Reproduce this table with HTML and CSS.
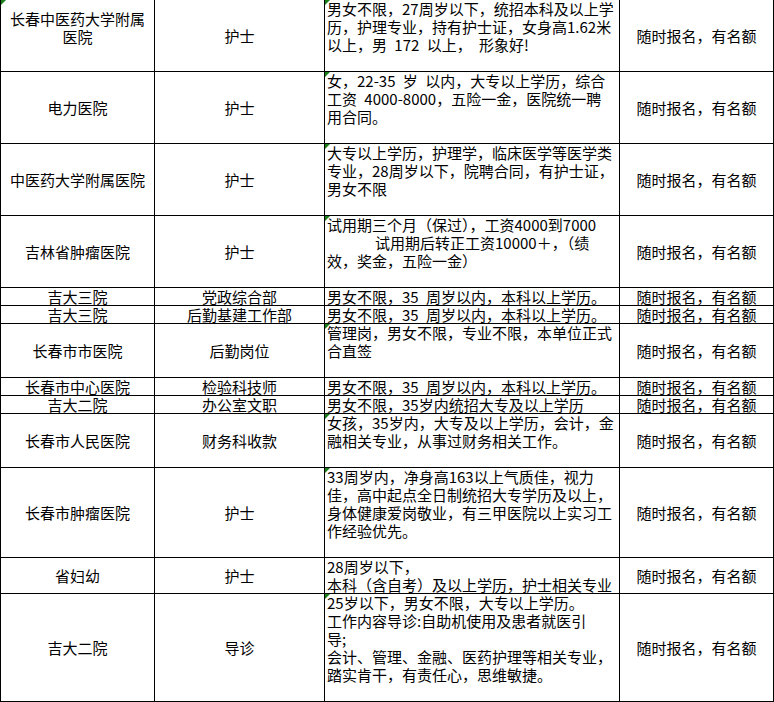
FILE: index.html
```html
<!DOCTYPE html>
<html lang="zh-CN">
<head>
<meta charset="utf-8">
<title>招聘信息</title>
<link rel="stylesheet" href="styles.css">
</head>
<body>
<div class="sheet">
  <div class="cell c mark first-name">长春中医药大学附属<br>医院</div>
  <div class="cell c">护士</div>
  <div class="cell t mark">男女不限，27周岁以下，统招本科及以上学<br>历，护理专业，持有护士证，女身高1.62米<br>以上，男 172 以上， 形象好!</div>
  <div class="cell c">随时报名，有名额</div>

  <div class="cell c">电力医院</div>
  <div class="cell c">护士</div>
  <div class="cell t mark">女，22-35 岁 以内，大专以上学历，综合<br>工资 4000-8000，五险一金，医院统一聘<br>用合同。</div>
  <div class="cell c">随时报名，有名额</div>

  <div class="cell c">中医药大学附属医院</div>
  <div class="cell c">护士</div>
  <div class="cell t mark">大专以上学历，护理学，临床医学等医学类<br>专业，28周岁以下，院聘合同，有护士证，<br>男女不限</div>
  <div class="cell c">随时报名，有名额</div>

  <div class="cell c">吉林省肿瘤医院</div>
  <div class="cell c">护士</div>
  <div class="cell t mark">试用期三个月（保过），工资4000到7000<br><span class="indent"></span>试用期后转正工资10000＋，（绩<br>效，奖金，五险一金）</div>
  <div class="cell c">随时报名，有名额</div>

  <div class="cell c">吉大三院</div>
  <div class="cell c">党政综合部</div>
  <div class="cell t">男女不限，35 周岁以内，本科以上学历。</div>
  <div class="cell c">随时报名，有名额</div>

  <div class="cell c">吉大三院</div>
  <div class="cell c">后勤基建工作部</div>
  <div class="cell t">男女不限，35 周岁以内，本科以上学历。</div>
  <div class="cell c">随时报名，有名额</div>

  <div class="cell c">长春市市医院</div>
  <div class="cell c">后勤岗位</div>
  <div class="cell t mark">管理岗，男女不限，专业不限，本单位正式<br>合直签</div>
  <div class="cell c">随时报名，有名额</div>

  <div class="cell c">长春市中心医院</div>
  <div class="cell c">检验科技师</div>
  <div class="cell t">男女不限，35 周岁以内，本科以上学历。</div>
  <div class="cell c">随时报名，有名额</div>

  <div class="cell c">吉大二院</div>
  <div class="cell c">办公室文职</div>
  <div class="cell t">男女不限，35岁内统招大专及以上学历</div>
  <div class="cell c">随时报名，有名额</div>

  <div class="cell c">长春市人民医院</div>
  <div class="cell c">财务科收款</div>
  <div class="cell t mark">女孩，35岁内，大专及以上学历，会计，金<br>融相关专业，从事过财务相关工作。</div>
  <div class="cell c">随时报名，有名额</div>

  <div class="cell c">长春市肿瘤医院</div>
  <div class="cell c">护士</div>
  <div class="cell t mark">33周岁内，净身高163以上气质佳，视力<br>佳，高中起点全日制统招大专学历及以上，<br>身体健康爱岗敬业，有三甲医院以上实习工<br>作经验优先。</div>
  <div class="cell c">随时报名，有名额</div>

  <div class="cell c">省妇幼</div>
  <div class="cell c">护士</div>
  <div class="cell t">28周岁以下，<br>本科（含自考）及以上学历，护士相关专业</div>
  <div class="cell c">随时报名，有名额</div>

  <div class="cell c">吉大二院</div>
  <div class="cell c">导诊</div>
  <div class="cell t mark">25岁以下，男女不限，大专以上学历。<br>工作内容导诊:自助机使用及患者就医引<br>导;<br>会计、管理、金融、医药护理等相关专业，<br>踏实肯干，有责任心，思维敏捷。</div>
  <div class="cell c">随时报名，有名额</div>
</div>
</body>
</html>
```
FILE: styles.css
```css
html, body {
  margin: 0;
  padding: 0;
  background: #ffffff;
}

body {
  font-family: "Noto Sans CJK SC", "Noto Sans", sans-serif;
  font-size: 15px;
  line-height: 18px;
  color: #000000;
  overflow: hidden;
}

.sheet {
  display: grid;
  grid-template-columns: 154px 170px 295px 154px;
  grid-template-rows: 72px 72px 72px 72px 18px 18px 54px 18px 18px 54px 90px 36px 108px;
  width: 774px;
  margin-top: -1px;
  border-left: 1px solid #000;
  border-top: 1px solid #000;
  box-sizing: border-box;
}

.cell {
  position: relative;
  box-sizing: border-box;
  border-right: 1px solid #000;
  border-bottom: 1px solid #000;
  white-space: nowrap;
}

.c {
  display: flex;
  align-items: center;
  justify-content: center;
  text-align: center;
}

.t {
  padding-left: 2px;
  text-align: left;
  word-spacing: 4px;
}

.first-name {
  padding-bottom: 16px;
}

.indent {
  display: inline-block;
  width: 48px;
}

.mark::before {
  content: "";
  position: absolute;
  left: 0;
  top: 0;
  width: 0;
  height: 0;
  border-top: 5px solid #1a7f1a;
  border-right: 5px solid transparent;
}
```
